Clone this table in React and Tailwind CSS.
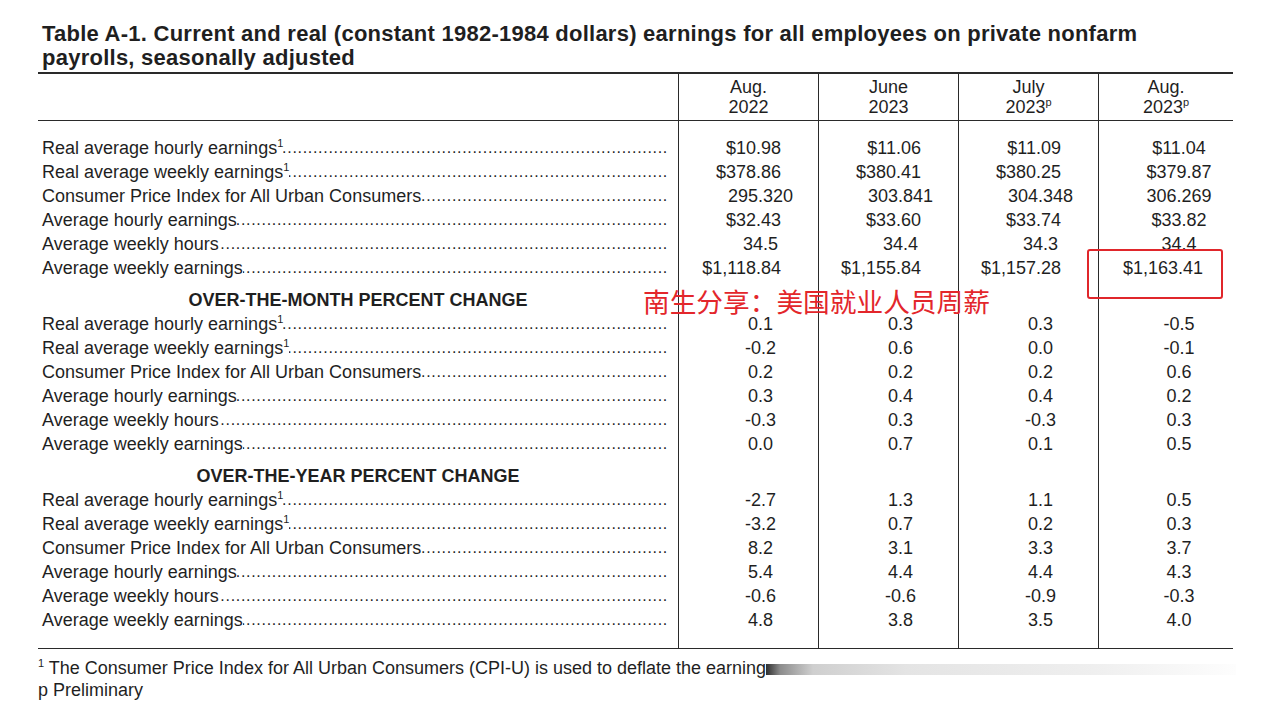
import React from 'react'

const COLS = [
  { top: 'Aug.', year: '2022', p: false },
  { top: 'June', year: '2023', p: false },
  { top: 'July', year: '2023', p: true },
  { top: 'Aug.', year: '2023', p: true },
]

const LABELS = [
  ['Real average hourly earnings', true],
  ['Real average weekly earnings', true],
  ['Consumer Price Index for All Urban Consumers', false],
  ['Average hourly earnings', false],
  ['Average weekly hours', false],
  ['Average weekly earnings', false],
]

const SECTIONS = [
  {
    title: null,
    rows: [
      ['$10.98', '$11.06', '$11.09', '$11.04'],
      ['$378.86', '$380.41', '$380.25', '$379.87'],
      ['295.320', '303.841', '304.348', '306.269'],
      ['$32.43', '$33.60', '$33.74', '$33.82'],
      ['34.5', '34.4', '34.3', '34.4'],
      ['$1,118.84', '$1,155.84', '$1,157.28', '$1,163.41'],
    ],
  },
  {
    title: 'OVER-THE-MONTH PERCENT CHANGE',
    rows: [
      ['0.1', '0.3', '0.3', '-0.5'],
      ['-0.2', '0.6', '0.0', '-0.1'],
      ['0.2', '0.2', '0.2', '0.6'],
      ['0.3', '0.4', '0.4', '0.2'],
      ['-0.3', '0.3', '-0.3', '0.3'],
      ['0.0', '0.7', '0.1', '0.5'],
    ],
  },
  {
    title: 'OVER-THE-YEAR PERCENT CHANGE',
    rows: [
      ['-2.7', '1.3', '1.1', '0.5'],
      ['-3.2', '0.7', '0.2', '0.3'],
      ['8.2', '3.1', '3.3', '3.7'],
      ['5.4', '4.4', '4.4', '4.3'],
      ['-0.6', '-0.6', '-0.9', '-0.3'],
      ['4.8', '3.8', '3.5', '4.0'],
    ],
  },
]

// the source isn't strictly centred: dollar figures hang right, plain numbers sit right of centre
function align(col, value) {
  if (col === 3) return value.startsWith('$1,') ? 'justify-center pr-[6px]' : 'justify-center pl-[26px]'
  if (value.startsWith('$')) return 'justify-end pr-[37px]'
  return 'justify-center pl-[24px]'
}

function Sup({ children }) {
  return <sup className="text-[11px] relative -top-[7px] align-baseline">{children}</sup>
}

function Label({ text, sup }) {
  return (
    <div className="h-6 flex items-center pl-1 pr-[10px] overflow-hidden">
      <span className="whitespace-nowrap">
        {text}
        {sup && <Sup>1</Sup>}
      </span>
      <span className="flex-1 overflow-hidden whitespace-nowrap text-[16px] tracking-[0.7px] text-right" dir="rtl">{'.'.repeat(120)}</span>
    </div>
  )
}

export default function App() {
  return (
    <div className="w-[1280px] h-[723px] bg-white relative overflow-hidden text-[#1f1f1f] font-['Liberation_Sans',Arial,sans-serif]">
      <h1 className="pl-[42px] pt-[22px] text-[22px] leading-[24px] font-bold tracking-[0.25px]">
        Table A-1. Current and real (constant 1982-1984 dollars) earnings for all employees on private nonfarm
        <br />
        payrolls, seasonally adjusted
      </h1>

      <div className="ml-[38px] w-[1195px] mt-[2px] border-t-2 border-b border-[#2a2a2a] text-[18px]">
        <div className="grid grid-cols-[640px_140px_140px_140px_135px] h-[47px] border-b border-[#2a2a2a]">
          <div />
          {COLS.map((c, i) => (
            <div key={i} className="border-l border-[#2a2a2a] text-center leading-5 pt-[3px]">
              <div>{c.top}</div>
              <div>
                {c.year}
                {c.p && <Sup>p</Sup>}
              </div>
            </div>
          ))}
        </div>

        <div className="grid grid-cols-[640px_140px_140px_140px_135px]">
          <div className="pt-[15px] pb-4">
            {SECTIONS.map((s, si) => (
              <div key={si}>
                {s.title && (
                  <div className="h-8 flex items-end justify-center font-bold leading-6">{s.title}</div>
                )}
                {LABELS.map(([t, sup], ri) => (
                  <Label key={ri} text={t} sup={sup} />
                ))}
              </div>
            ))}
          </div>
          {COLS.map((c, ci) => (
            <div key={ci} className="border-l border-[#2a2a2a] pt-[15px] pb-[15px]">
              {SECTIONS.map((s, si) => (
                <div key={si}>
                  {s.title && <div className="h-8" />}
                  {s.rows.map((r, ri) => (
                    <div key={ri} className={`h-6 flex items-center ${align(ci, r[ci])}`}>
                      {r[ci]}
                    </div>
                  ))}
                </div>
              ))}
            </div>
          ))}
        </div>
      </div>

      <div className="pl-[38px] pt-[8px] text-[18px] leading-[22px]">
        <div className="whitespace-nowrap">
          <Sup>1</Sup> The Consumer Price Index for All Urban Consumers (CPI-U) is used to deflate the earning
          {/* smudge over the rest of the footnote */}
          <span className="inline-block align-middle w-[470px] h-[11px] bg-[linear-gradient(to_right,#2e2e2e,#8c8c8c_3%,#cfcfcf_10%,#e4e4e4_30%,#efefef_70%,#fdfdfd)]" />
        </div>
        <div>p Preliminary</div>
      </div>

      {/* watermark and highlight */}
      <div className="absolute left-[1087px] top-[249px] w-[136px] h-[50px] border-[2.5px] border-[#e0262b] rounded-[3px]" />
      <div className="absolute left-[643px] top-[284px] text-[26.7px] leading-[34px] text-[#e3262b] font-['Noto_Sans_CJK_SC',sans-serif]">
        南生分享：美国就业人员周薪
      </div>
    </div>
  )
}
